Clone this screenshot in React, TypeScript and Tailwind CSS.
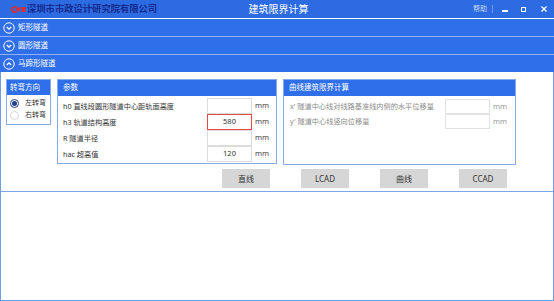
import { useState } from 'react';

const Chevron = ({ up }: { up?: boolean }) => (
  <svg width="12" height="12" viewBox="0 0 12 12" className="shrink-0">
    <circle cx="6" cy="6" r="5.2" fill="none" stroke="white" strokeWidth="1" />
    <path d={up ? 'M3.8 7 L6 4.8 L8.2 7' : 'M3.8 5 L6 7.2 L8.2 5'} fill="none" stroke="white" strokeWidth="1.3" />
  </svg>
);

const Row = ({ label, value, red }: { label: string; value?: string; red?: boolean }) => (
  <div className="flex items-center h-[16px]">
    <span className="w-[144px] text-[7.2px] text-[#333] whitespace-nowrap">{label}</span>
    <div
      className={`w-[45px] h-[16px] bg-white border flex items-center justify-center text-[7.5px] text-[#333] ${
        red ? 'border-[#e04a4a]' : 'border-[#dcdcdc]'
      }`}
    >
      {value}
    </div>
    <span className="ml-[3px] text-[7.5px] text-[#444]">mm</span>
  </div>
);

const CurveRow = ({ label }: { label: string }) => (
  <div className="flex items-center h-[15px]">
    <span className="w-[155px] text-[7.2px] text-[#8a8a8a] whitespace-nowrap">{label}</span>
    <div className="w-[45px] h-[15px] bg-white border border-[#e2e2e2]" />
    <span className="ml-[3px] text-[7.5px] text-[#999]">mm</span>
  </div>
);

export default function App() {
  const [dir, setDir] = useState('left');
  const sections = ['矩形隧道', '圆形隧道', '马蹄形隧道'];

  return (
    <div className="w-[554px] h-[301px] flex flex-col bg-white font-['Noto_Sans','Noto_Sans_CJK_SC',sans-serif]">
      {/* title bar */}
      <div className="h-[18px] bg-[#2d6be2] flex items-center border-b border-white box-content">
        <div className="flex-1 flex items-center pl-[10px]">
          <svg width="16" height="9" viewBox="0 0 16 9">
            <path d="M1 4.5 C1 1.5 4 0.5 7 1.5 L6 3 C4.5 2.4 3 3 3 4.5 C3 6 4.5 6.6 6 6 L7 7.5 C4 8.5 1 7.5 1 4.5 Z" fill="#e52a2a" />
            <path d="M6.5 2.5 L11 2.5 L9 6.5 L6.5 6.5 Z" fill="#e52a2a" />
            <rect x="11.5" y="2" width="4" height="5" fill="#e52a2a" />
          </svg>
          <span className="ml-[1px] text-[9.3px] font-bold text-[#152a8e] whitespace-nowrap">
            深圳市市政设计研究院有限公司
          </span>
        </div>
        <span className="text-[10px] text-white whitespace-nowrap">建筑限界计算</span>
        <div className="flex-1 flex items-center justify-end pr-[7px] text-white">
          <span className="text-[7px] text-[#c8d8f8]">帮助</span>
          <span className="ml-[5px] w-px h-[8px] bg-[#6f98ea]" />
          <span className="ml-[9px] w-[6px] h-[1.5px] bg-white mt-[4px]" />
          <span className="ml-[13px] w-[5px] h-[5px] border border-white" />
          <svg width="6" height="6" viewBox="0 0 6 6" className="ml-[15px]">
            <path d="M0.5 0.5 L5.5 5.5 M5.5 0.5 L0.5 5.5" stroke="white" strokeWidth="1.3" />
          </svg>
        </div>
      </div>

      {/* accordion headers */}
      {sections.map((s, i) => (
        <div
          key={s}
          className={`h-[17px] bg-[#2f6fea] flex items-center pl-[3px] gap-[3px] ${
            i > 0 ? 'border-t border-[#8fb3f2] box-content' : ''
          }`}
        >
          <Chevron up={i === 2} />
          <span className="text-[7.5px] text-white">{s}</span>
        </div>
      ))}

      <div className="flex-1 flex flex-col border-x border-b border-[#6f9ce6]">
        {/* content */}
        <div className="h-[120px] border-b border-[#7ea5e8] pt-[7px] pl-[5px]">
          <div className="flex gap-[6px] items-start">
            <div className="w-[45px] h-[46px] border border-[#86abe9]">
              <div className="h-[15px] bg-[#2f6fea] text-white text-[7.5px] flex items-center pl-[3px]">转弯方向</div>
              <div className="pl-[3px] pt-[2px]">
                {[
                  ['left', '左转弯'],
                  ['right', '右转弯'],
                ].map(([k, t]) => (
                  <label key={k} className="flex items-center h-[12px] gap-[6px] cursor-pointer" onClick={() => setDir(k)}>
                    <span
                      className={`w-[9px] h-[9px] rounded-full border flex items-center justify-center ${
                        dir === k ? 'border-[#23418c]' : 'border-[#d6d6d6]'
                      }`}
                    >
                      {dir === k && <span className="w-[5px] h-[5px] rounded-full bg-[#23418c]" />}
                    </span>
                    <span className="text-[7px] text-[#333]">{t}</span>
                  </label>
                ))}
              </div>
            </div>

            <div className="w-[220px] h-[85px] border border-[#86abe9]">
              <div className="h-[16px] bg-[#2f6fea] text-white text-[7.5px] flex items-center pl-[5px]">参数</div>
              <div className="pl-[5px] pt-[2px]">
                <Row label="h0 直线段圆形隧道中心距轨面高度" />
                <Row label="h3 轨道结构高度" value="580" red />
                <Row label="R 隧道半径" />
                <Row label="hac 超高值" value="120" />
              </div>
            </div>

            <div className="w-[233px] h-[86px] border border-[#86abe9]">
              <div className="h-[16px] bg-[#2f6fea] text-white text-[7.5px] flex items-center pl-[5px]">曲线建筑限界计算</div>
              <div className="pl-[6px] pt-[3px]">
                <CurveRow label="x' 隧道中心线对线路基准线内侧的水平位移量" />
                <CurveRow label="y' 隧道中心线竖向位移量" />
              </div>
            </div>
          </div>

          <div className="flex gap-[31px] pl-[216px] mt-[4px]">
            {['直线', 'LCAD', '曲线', 'CCAD'].map((b) => (
              <button key={b} className="w-[48px] h-[19px] bg-[#d6d6d6] text-[8px] text-[#333] flex items-center justify-center">
                {b}
              </button>
            ))}
          </div>
        </div>
        <div className="flex-1" />
      </div>
    </div>
  );
}
